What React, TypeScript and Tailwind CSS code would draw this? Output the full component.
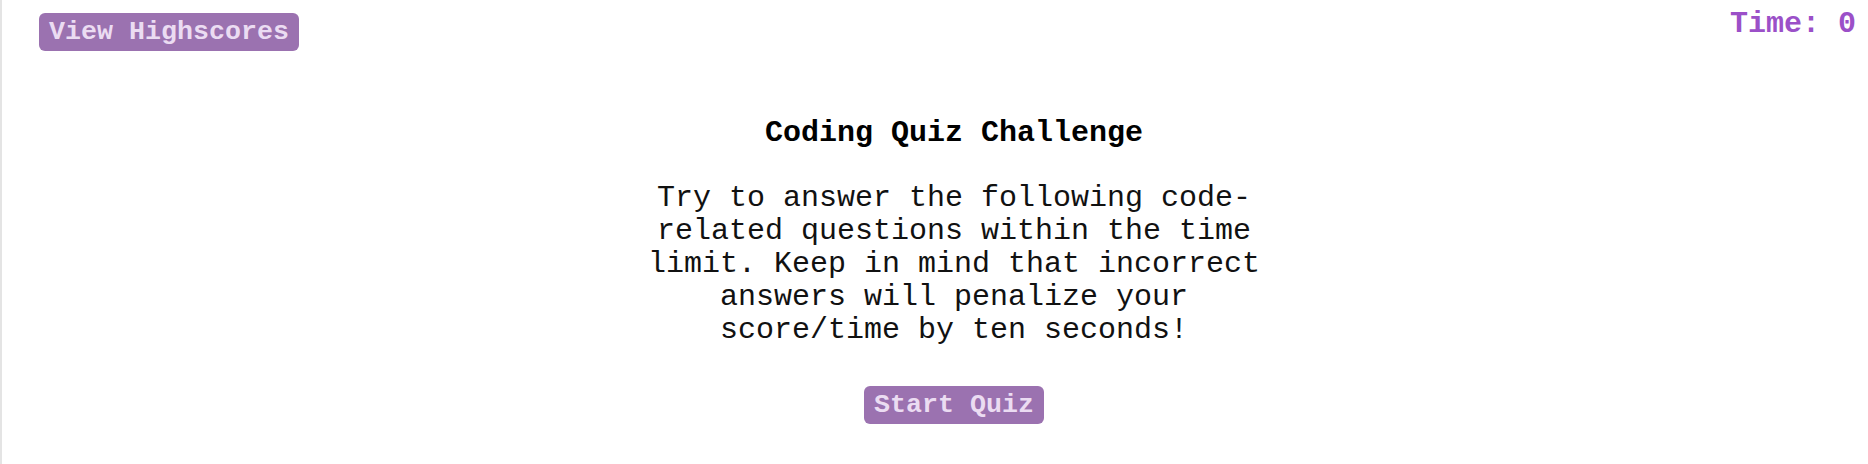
export default function App() {
  return (
    <div className="h-[464px] w-full overflow-hidden border-l-2 border-[#e4e4e4] bg-white font-['Liberation_Mono','Courier_New',monospace]">
      <header className="flex items-start justify-between">
        <button className="ml-[37px] mt-[13px] rounded-md bg-[#9b72b0] px-[10px] py-1 text-[26.67px] font-bold leading-[30px] text-[#ebdcf2]">
          View Highscores
        </button>
        <div className="mr-[12px] mt-[7px] text-[30px] font-bold leading-[34px] text-[#9b50c8]">Time: 0</div>
      </header>

      <main className="flex flex-col items-center pl-[38px]">
        <h1 className="mt-[65px] text-[30px] font-bold leading-[34px] text-black">Coding Quiz Challenge</h1>
        <p className="mt-[32px] w-[630px] text-center text-[30px] leading-[33px] text-[#111]">
          Try to answer the following code-related questions within the time limit. Keep in mind that incorrect
          answers will penalize your score/time by ten seconds!
        </p>
        <button className="mt-[39px] rounded-md bg-[#9b72b0] px-[10px] py-1 text-[26.67px] font-bold leading-[30px] text-[#ebdcf2]">
          Start Quiz
        </button>
      </main>
    </div>
  );
}
